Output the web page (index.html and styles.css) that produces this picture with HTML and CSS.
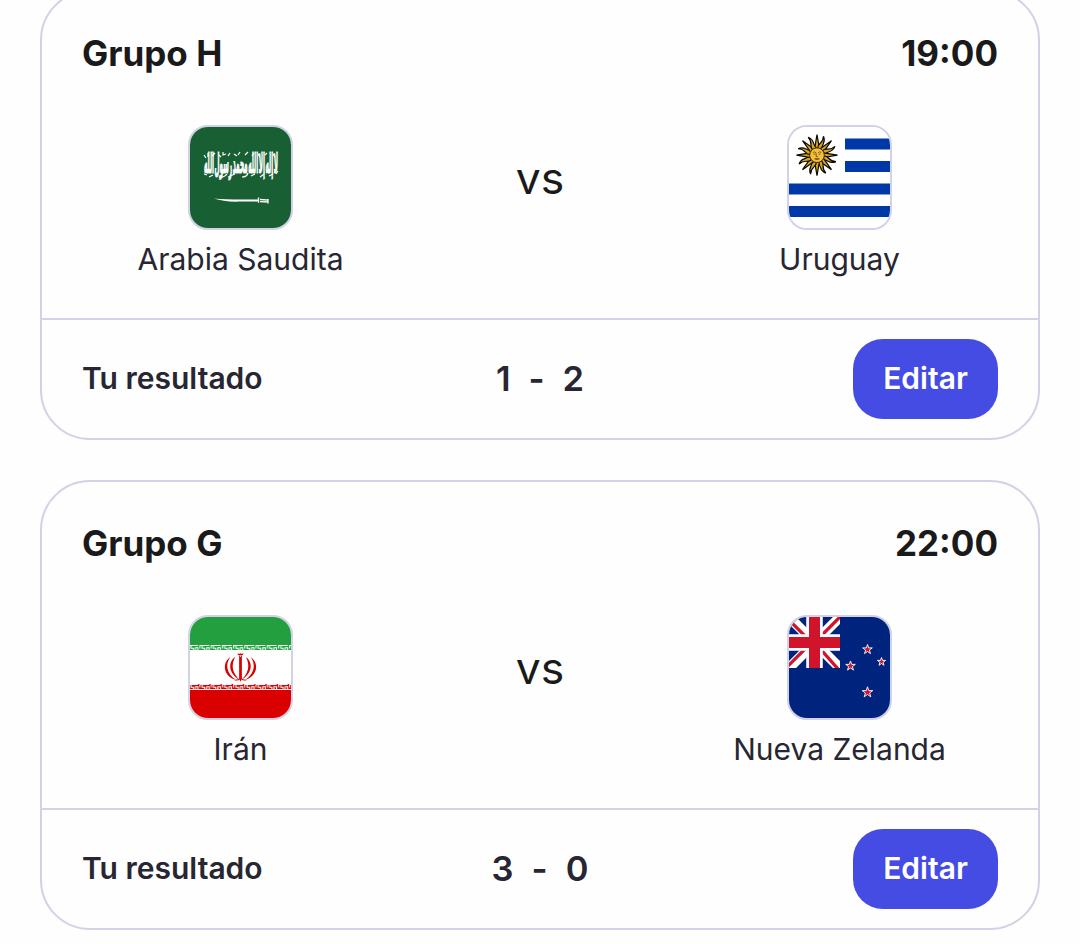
FILE: index.html
```html
<!DOCTYPE html>
<html lang="es">
<head>
<meta charset="utf-8">
<title>Partidos</title>
<link rel="stylesheet" href="styles.css">
</head>
<body>
<main class="matches">
  <article class="card">
    <header class="card-head"><span>Grupo H</span><span>19:00</span></header>
    <div class="teams">
      <div class="team">
        <svg class="flag" viewBox="0 0 101 101">
          <rect width="101" height="101" fill="#186033"/>
          <text class="shahada" transform="translate(51 46) scale(.66 1.7)" text-anchor="middle" textLength="112" lengthAdjust="spacingAndGlyphs">لا إله إلا الله محمد رسول الله</text>
          <path d="M14 28l2 3M18 26v4M22 29l3-3M29 28l2 2M33 25v3l3-1M38 29l2-3M44 27l3 2M50 25l-2 3M55 28l3-3M62 29l2-3M68 27l2 3M75 28l2-2M83 27l2 3M14 47l3 1M19 50l4-2M29 50q5 1 8-3M40 49l5-2M52 50q5 0 6-4M61 49l4-2M70 50l4-3M79 49l4-2M86 47l2-3" fill="none" stroke="#fff" stroke-width="1.200"/>
          <path d="M24 71.500Q38 73 68 72.400V74.600H49Q34 75 24 71.500Z" fill="#fff"/>
          <path d="M68.500 70.500V75.800M70 72.500L78 73V75L70 74.600M78 72V76.500" fill="none" stroke="#fff" stroke-width="1.300"/>
        </svg>
        <span class="name">Arabia Saudita</span>
      </div>
      <span class="versus">vs</span>
      <div class="team">
        <svg class="flag" viewBox="0 0 101 101">
          <rect width="101" height="101" fill="#fff"/>
          <path d="M56 11.500h45v11H56zM56 34h45v11H56zM0 56.400h101v11H0zM0 79h101v11H0z" fill="#0038a8"/>
          <g transform="translate(28 28.200) scale(1.050)">
            <g fill="#d9a520" stroke="#0c0a04" stroke-width="1.150">
              <path id="ray" d="M-2.300-6L0-19.500L2.300-6Z"/>
              <path id="wave" d="M-2-6.500C-4-11 1.500-12-1.200-19C4-14-.5-11.500 2.200-6.500Z" transform="rotate(22.500)"/>
              <use href="#ray" transform="rotate(45)"/><use href="#wave" transform="rotate(45)"/>
              <use href="#ray" transform="rotate(90)"/><use href="#wave" transform="rotate(90)"/>
              <use href="#ray" transform="rotate(135)"/><use href="#wave" transform="rotate(135)"/>
              <use href="#ray" transform="rotate(180)"/><use href="#wave" transform="rotate(180)"/>
              <use href="#ray" transform="rotate(225)"/><use href="#wave" transform="rotate(225)"/>
              <use href="#ray" transform="rotate(270)"/><use href="#wave" transform="rotate(270)"/>
              <use href="#ray" transform="rotate(315)"/><use href="#wave" transform="rotate(315)"/>
            </g>
            <circle r="7" fill="#f3c03a" stroke="#3c2a05" stroke-width=".9"/>
            <path d="M-4-2.600Q-2.300-3.800-1-2.300M4-2.600Q2.300-3.800 1-2.300M-3.300-1h1.700M3.300-1H1.600M-.8-2V1.300H.9M-2.200 3.500Q0 2.700 2.200 3.500Q0 4.900-2.200 3.500" fill="none" stroke="#704808" stroke-width=".8"/>
          </g>
        </svg>
        <span class="name">Uruguay</span>
      </div>
    </div>
    <footer class="card-foot"><span class="label">Tu resultado</span><span class="score"><b>1</b><b>-</b><b>2</b></span><button class="edit">Editar</button></footer>
  </article>

  <article class="card">
    <header class="card-head"><span>Grupo G</span><span>22:00</span></header>
    <div class="teams">
      <div class="team">
        <svg class="flag" viewBox="0 0 101 101">
          <defs>
            <pattern id="band" width="11.220" height="6" patternUnits="userSpaceOnUse">
              <path d="M0 .6H8M9.500 .6H11.220M0 5.400H11.220M1 1V3.200H3.500V5M5.500 5V2.800H8V5M10 .6V3.600" fill="none" stroke="#fff"/>
            </pattern>
          </defs>
          <rect width="101" height="101" fill="#fff"/>
          <rect width="101" height="34" fill="#239f40"/>
          <rect y="67" width="101" height="34" fill="#da0000"/>
          <rect width="101" height="6" fill="url(#band)" transform="translate(0 28)"/>
          <rect width="101" height="6" fill="url(#band)" transform="translate(0 67)"/>
          <g transform="translate(50.500 50) scale(1.060 1.060)" fill="#da0000">
            <path d="M-1.300-11L0-9.500L1.300-11V11L0 14L-1.300 11Z"/>
            <path d="M-3-13Q-1.500-11.800 0-13Q1.500-11.800 3-13Q2.500-10.600 0-11Q-2.500-10.600-3-13Z"/>
            <path id="petals" d="M5-9.500C12-5 11.500 6 1 12C8 5 9-2 5-9.500ZM9.500-9.500C18-4 16 9 4.500 12C13.500 6 14.500-3 9.500-9.500ZM0 11L6 12.300Q3 13.800 0 11Z"/>
            <use href="#petals" transform="scale(-1 1)"/>
          </g>
        </svg>
        <span class="name">Irán</span>
      </div>
      <span class="versus">vs</span>
      <div class="team">
        <svg class="flag" viewBox="0 0 101 101">
          <defs><clipPath id="canton"><rect width="51" height="51"/></clipPath></defs>
          <rect width="101" height="101" fill="#00247d"/>
          <g clip-path="url(#canton)">
            <path d="M0 0L51 51M51 0L0 51" stroke="#fff" stroke-width="10"/>
            <path d="M-1.500 1.500L24 27M27 24L52.500-1.500M24 24L-1.500 49.500M27 27L49.500 52.500" stroke="#cf142b" stroke-width="3.300"/>
            <path d="M25.500 0V51M0 25.500H51" stroke="#fff" stroke-width="16.500"/>
            <path d="M25.500 0V51M0 25.500H51" stroke="#cf142b" stroke-width="11"/>
          </g>
          <g fill="#cc142b" stroke="#fff" stroke-width=".9">
            <path d="M0-5L1.200-1.600H4.800L1.900.6L3 4.100L0 2L-3 4.100L-1.900.6L-4.800-1.600H-1.200Z" transform="translate(78.500 32.500)"/>
            <path d="M0-5L1.200-1.600H4.800L1.900.6L3 4.100L0 2L-3 4.100L-1.900.6L-4.800-1.600H-1.200Z" transform="translate(61.500 49)"/>
            <path d="M0-4.300L1-1.400H4.100L1.600.5L2.500 3.500L0 1.700L-2.500 3.500L-1.600.5L-4.100-1.400H-1Z" transform="translate(92.500 44.800)"/>
            <path d="M0-5.500L1.300-1.700H5.300L2.100.7L3.300 4.500L0 2.200L-3.300 4.500L-2.100.7L-5.300-1.700H-1.300Z" transform="translate(78.500 75.300)"/>
          </g>
        </svg>
        <span class="name">Nueva Zelanda</span>
      </div>
    </div>
    <footer class="card-foot"><span class="label">Tu resultado</span><span class="score"><b>3</b><b>-</b><b>0</b></span><button class="edit">Editar</button></footer>
  </article>
</main>
</body>
</html>
```
FILE: styles.css
```css
* { box-sizing: border-box; }
body {
  margin: 0;
  height: 944px;
  overflow: hidden;
  background: #fefefe;
  color: #272632;
  font-family: Inter, "Liberation Sans", sans-serif;
}
.matches {
  display: flex;
  flex-direction: column;
  gap: 40px;
  margin-top: -10px;
  padding: 0 40px;
}
.card {
  display: flex;
  flex-direction: column;
  height: 450px;
  border: 2px solid #d1d2e6;
  border-radius: 50px;
  background: #fefefe;
}
.card-head {
  display: flex;
  justify-content: space-between;
  padding: 39px 40px 0;
  color: #1a1a1a;
  font-size: 35px;
  font-weight: 700;
  line-height: 44px;
}
.teams {
  display: grid;
  grid-template-columns: 1fr 202px 1fr;
  flex: 1;
  padding-top: 50px;
}
.team {
  display: flex;
  flex-direction: column;
  align-items: center;
  gap: 9px;
}
.flag {
  width: 105px;
  height: 105px;
  border: 2px solid #d1d2e6;
  border-radius: 20px;
}
.shahada {
  direction: rtl;
  fill: #fff;
  stroke: #fff;
  stroke-width: .7px;
  font-family: "DejaVu Sans", sans-serif;
  font-size: 16px;
  font-weight: 700;
  word-spacing: -4px;
}
.name {
  font-size: 30px;
  line-height: 40px;
}
.versus {
  padding-top: 28px;
  color: #1a1a1a;
  font-size: 44.5px;
  line-height: 50px;
  text-align: center;
}
.card-foot {
  display: grid;
  grid-template-columns: 1fr auto 1fr;
  align-items: center;
  height: 120px;
  padding: 0 40px;
  border-top: 2px solid #d1d2e6;
  font-size: 30px;
  font-weight: 600;
}
.label, .score { padding-bottom: 2px; }
.score {
  display: flex;
  gap: 18px;
  font-size: 34.5px;
}
.score b { font-weight: 600; }
.edit {
  justify-self: end;
  width: 145px;
  height: 80px;
  padding: 0 0 2px;
  border: 0;
  border-radius: 30px;
  background: #444ce4;
  color: #fff;
  font: inherit;
}
```
